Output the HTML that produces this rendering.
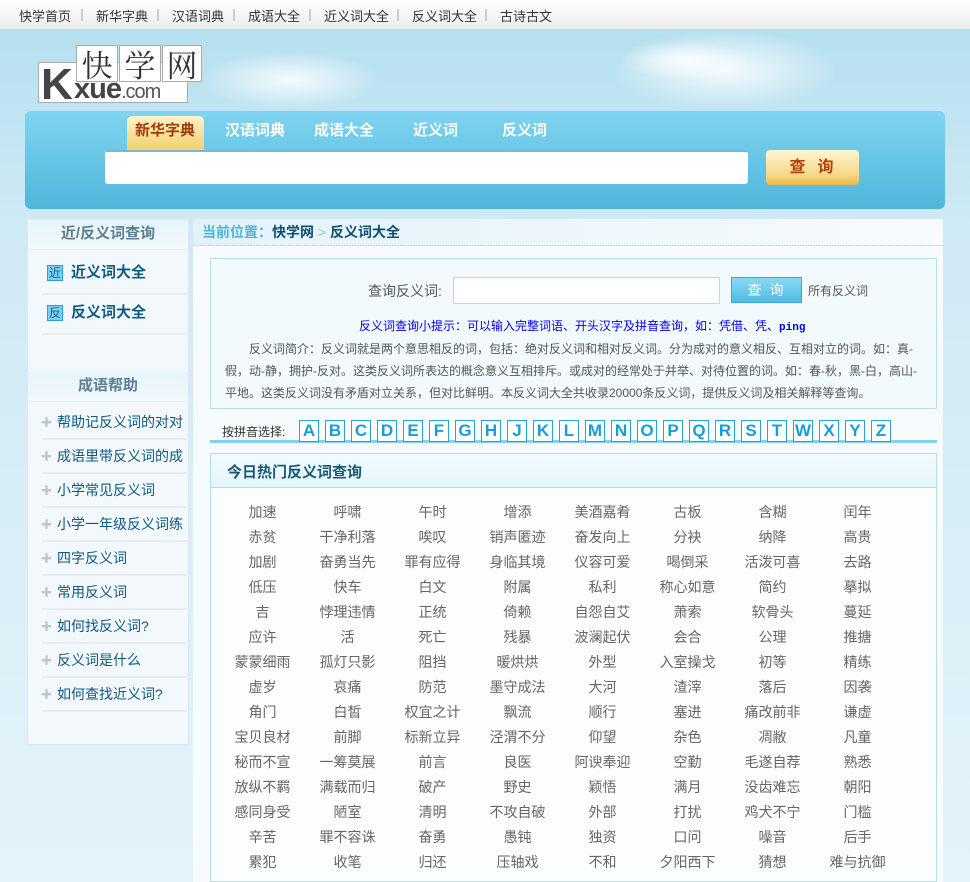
<!DOCTYPE html>
<html><head><meta charset="utf-8"><style>
*{margin:0;padding:0;box-sizing:border-box}
body{width:970px;height:882px;overflow:hidden;font-family:"Liberation Sans","Noto Sans CJK SC",sans-serif;font-size:13px;color:#555;background:linear-gradient(#b6e0ef 30px,#cfeaf5 230px,#e4f3fa 882px);position:relative}
.a{position:absolute}
.top{left:0;top:0;width:970px;height:29px;background:linear-gradient(#fff,#ececec);font-size:13px;color:#333}
.top span{position:absolute;top:6px}
.top i{position:absolute;top:9px;width:2px;height:12px;background:#ccc}
.cl{background:radial-gradient(ellipse at center,rgba(255,255,255,.85),rgba(255,255,255,0) 70%)}
.bar{left:25px;top:111px;width:920px;height:98px;border-radius:6px;background:linear-gradient(#80d4f0,#4fb6da)}
.tab{top:8px;font-size:15px;font-weight:bold;color:#fff}
.inp{left:80px;top:39px;width:643px;height:34px;background:#fff;border-radius:3px;border-top:2px solid #7ab8cf}
.btn{left:741px;top:39px;width:93px;height:35px;border-radius:4px;background:linear-gradient(#fff6d2,#f5d98a 70%,#e6b84c);color:#b5400c;font-size:16px;font-weight:bold;text-align:center;line-height:35px;letter-spacing:12px;padding-left:10px}
.side{left:27px;top:219px;width:162px;height:526px;background:#f3f8fc;border:1px solid #dde9f0}
.sh{position:absolute;left:0;width:160px;height:30px;text-align:center;font-size:15px;font-weight:bold;color:#5b7d8f;background:linear-gradient(#e6f5fc,#f3f8fc);line-height:28px;border-bottom:1px solid #e3eef5}
.sl{position:absolute;left:13px;width:146px;border-bottom:2px solid #e6eef4;color:#0e5a80;font-size:14px}
.sl b{position:absolute;left:0px;top:1px;color:#bcc8d0;font-size:11px}
.main{left:193px;top:219px;width:750px;height:663px;background:#f7fbfd}
.words span{position:absolute;width:85px;text-align:center;font-size:14px;color:#666}
.lt{position:absolute;top:420px;width:20px;height:22px;border:1px solid #25a6d8;color:#14a0d6;font-weight:bold;font-size:17px;text-align:center;line-height:20px;background:#fff}
</style></head><body>
<div class="a top">
<span style="left:19px">快学首页</span><i style="left:81px"></i>
<span style="left:96px">新华字典</span><i style="left:157px"></i>
<span style="left:172px">汉语词典</span><i style="left:233px"></i>
<span style="left:248px">成语大全</span><i style="left:309px"></i>
<span style="left:324px">近义词大全</span><i style="left:397px"></i>
<span style="left:412px">反义词大全</span><i style="left:485px"></i>
<span style="left:500px">古诗古文</span>
</div>
<div class="a cl" style="left:200px;top:50px;width:180px;height:60px"></div>
<div class="a cl" style="left:610px;top:30px;width:230px;height:80px"></div>
<div class="a cl" style="left:620px;top:40px;width:130px;height:40px"></div>
<!-- logo -->
<div class="a" style="left:38px;top:62px;width:150px;height:41px;background:#fff;border:1px solid #aaa"></div>
<div class="a" style="left:41px;top:60px;font:bold 44px 'Liberation Sans',sans-serif;color:#444;letter-spacing:-2px">K</div>
<div class="a" style="left:74px;top:73px;font:bold 29px 'Liberation Sans',sans-serif;color:#444;letter-spacing:-1px">xue<span style="font-weight:normal;font-size:20px;color:#555">.com</span></div>
<div class="a" style="left:76px;top:45px;width:42px;height:37px;background:#fff;border:1px solid #aaa;font:31px 'Noto Serif CJK SC',serif;color:#333;text-align:center;line-height:35px">快</div>
<div class="a" style="left:119px;top:45px;width:42px;height:37px;background:#fff;border:1px solid #aaa;font:31px 'Noto Serif CJK SC',serif;color:#333;text-align:center;line-height:35px">学</div>
<div class="a" style="left:162px;top:45px;width:40px;height:37px;background:#fff;border:1px solid #aaa;font:31px 'Noto Serif CJK SC',serif;color:#333;text-align:center;line-height:35px">网</div>
<div class="a bar">
<div class="a" style="left:102px;top:5px;width:77px;height:34px;border-radius:5px 5px 0 0;background:linear-gradient(#fdf3cc,#f1cf6c)"></div>
<span class="a tab" style="left:110px;color:#a23a05">新华字典</span>
<span class="a tab" style="left:200px">汉语词典</span>
<span class="a tab" style="left:289px">成语大全</span>
<span class="a tab" style="left:388px">近义词</span>
<span class="a tab" style="left:477px">反义词</span>
<div class="a inp"></div>
<div class="a btn">查询</div>
</div>
<!-- sidebar -->
<div class="a side">
<div class="sh" style="top:0">近/反义词查询</div>
<div class="sl" style="top:35px;height:40px;line-height:36px;font-weight:bold;font-size:15px;padding-left:30px"><span style="position:absolute;left:6px;top:10px;width:16px;height:16px;background:#7fcdef;border:1px solid #2a9fd0;font-size:12px;line-height:14px;text-align:center;color:#0c6a98;font-weight:normal">近</span>近义词大全</div>
<div class="sl" style="top:75px;height:40px;line-height:36px;font-weight:bold;font-size:15px;padding-left:30px"><span style="position:absolute;left:6px;top:10px;width:16px;height:16px;background:#7fcdef;border:1px solid #2a9fd0;font-size:12px;line-height:14px;text-align:center;color:#0c6a98;font-weight:normal">反</span>反义词大全</div>
<div class="sh" style="top:152px;color:#607f90">成语帮助</div>
<div class="sl" style="top:186px;height:34px;line-height:32px;padding-left:16px"><b>✚</b>帮助记反义词的对对</div>
<div class="sl" style="top:220px;height:34px;line-height:32px;padding-left:16px"><b>✚</b>成语里带反义词的成</div>
<div class="sl" style="top:254px;height:34px;line-height:32px;padding-left:16px"><b>✚</b>小学常见反义词</div>
<div class="sl" style="top:288px;height:34px;line-height:32px;padding-left:16px"><b>✚</b>小学一年级反义词练</div>
<div class="sl" style="top:322px;height:34px;line-height:32px;padding-left:16px"><b>✚</b>四字反义词</div>
<div class="sl" style="top:356px;height:34px;line-height:32px;padding-left:16px"><b>✚</b>常用反义词</div>
<div class="sl" style="top:390px;height:34px;line-height:32px;padding-left:16px"><b>✚</b>如何找反义词?</div>
<div class="sl" style="top:424px;height:34px;line-height:32px;padding-left:16px"><b>✚</b>反义词是什么</div>
<div class="sl" style="top:458px;height:34px;line-height:32px;padding-left:16px"><b>✚</b>如何查找近义词?</div>
</div>
<div class="a main">
<div class="a" style="left:0;top:0;width:750px;height:27px;background:linear-gradient(90deg,#e3f2fa,#f7fbfd);border-bottom:1px dotted #c8c8c8"></div>
<div class="a" style="left:9px;top:3px;font-size:14px;font-weight:bold;color:#4fb3dc">当前位置：<span style="color:#0e4f6e">快学网</span> <span style="color:#8cc;font-weight:normal">&gt;</span> <span style="color:#0e4f6e">反义词大全</span></div>
</div>
<!-- search panel -->
<div class="a" style="left:210px;top:258px;width:727px;height:151px;border:1px solid #b6dcea;background:#f3fafd"></div>
<div class="a" style="left:368px;top:281px;font-size:14px;color:#555">查询反义词:</div>
<div class="a" style="left:453px;top:277px;width:267px;height:27px;border:1px solid #b6dcea;background:#fff"></div>
<div class="a" style="left:731px;top:277px;width:71px;height:26px;border:1px solid #3aa8d4;background:linear-gradient(#8adaf4,#4fbbe2);color:#fff;font-size:14px;text-align:center;line-height:24px;letter-spacing:8px;padding-left:6px">查询</div>
<div class="a" style="left:808px;top:282px;font-size:12px;color:#555">所有反义词</div>
<div class="a" style="left:359px;top:317px;font-size:12px;color:#0000ee">反义词查询小提示：可以输入完整词语、开头汉字及拼音查询，如：凭借、凭、<b style="font-family:'Liberation Mono',monospace;font-size:11px">ping</b></div>
<div class="a" style="left:225px;top:338px;width:700px;font-size:12px;color:#555;line-height:22px;text-indent:24px">反义词简介：反义词就是两个意思相反的词，包括：绝对反义词和相对反义词。分为成对的意义相反、互相对立的词。如：真-假，动-静，拥护-反对。这类反义词所表达的概念意义互相排斥。或成对的经常处于并举、对待位置的词。如：春-秋，黑-白，高山-平地。这类反义词没有矛盾对立关系，但对比鲜明。本反义词大全共收录20000条反义词，提供反义词及相关解释等查询。</div>
<!-- letters -->
<div class="a" style="left:222px;top:423px;font-size:12px;color:#333">按拼音选择:</div>
<div class="a" style="left:210px;top:440px;width:727px;height:3px;background:#84d2ee"></div>
<div id="lt"></div>
<!-- hot panel -->
<div class="a" style="left:210px;top:453px;width:727px;height:429px;border:1px solid #b6dcea;background:#fbfdfe"></div>
<div class="a" style="left:211px;top:454px;width:725px;height:34px;background:linear-gradient(#f3fafd,#e3f5fc);border-bottom:1px solid #b6dcea"></div>
<div class="a" style="left:227px;top:461px;font-size:15px;font-weight:bold;color:#145a75">今日热门反义词查询</div>
<div class="a words" id="w" style="left:220px;top:502px"></div>
<script>
var L="ABCDEFGHJKLMNOPQRSTWXYZ",h="";
for(var i=0;i<L.length;i++)h+='<div class="lt" style="left:'+(299+i*26)+'px">'+L[i]+'</div>';
document.getElementById('lt').outerHTML=h;
var W="加速 呼啸 午时 增添 美酒嘉肴 古板 含糊 闰年 赤贫 干净利落 唉叹 销声匿迹 奋发向上 分袂 纳降 高贵 加剧 奋勇当先 罪有应得 身临其境 仪容可爱 喝倒采 活泼可喜 去路 低压 快车 白文 附属 私利 称心如意 简约 摹拟 吉 悖理违情 正统 倚赖 自怨自艾 萧索 软骨头 蔓延 应许 活 死亡 残暴 波澜起伏 会合 公理 推搪 蒙蒙细雨 孤灯只影 阻挡 暖烘烘 外型 入室操戈 初等 精练 虚岁 哀痛 防范 墨守成法 大河 渣滓 落后 因袭 角门 白皙 权宜之计 飘流 顺行 塞进 痛改前非 谦虚 宝贝良材 前脚 标新立异 泾渭不分 仰望 杂色 凋敝 凡童 秘而不宣 一筹莫展 前言 良医 阿谀奉迎 空勤 毛遂自荐 熟悉 放纵不羁 满载而归 破产 野史 颖悟 满月 没齿难忘 朝阳 感同身受 陋室 清明 不攻自破 外部 打扰 鸡犬不宁 门槛 辛苦 罪不容诛 奋勇 愚钝 独资 口问 噪音 后手 累犯 收笔 归还 压轴戏 不和 夕阳西下 猜想 难与抗御".split(" "),s="";
for(var i=0;i<W.length;i++)s+='<span style="left:'+(i%8*85)+'px;top:'+(Math.floor(i/8)*25)+'px">'+W[i]+'</span>';
document.getElementById('w').innerHTML=s;
</script>
</body></html>
